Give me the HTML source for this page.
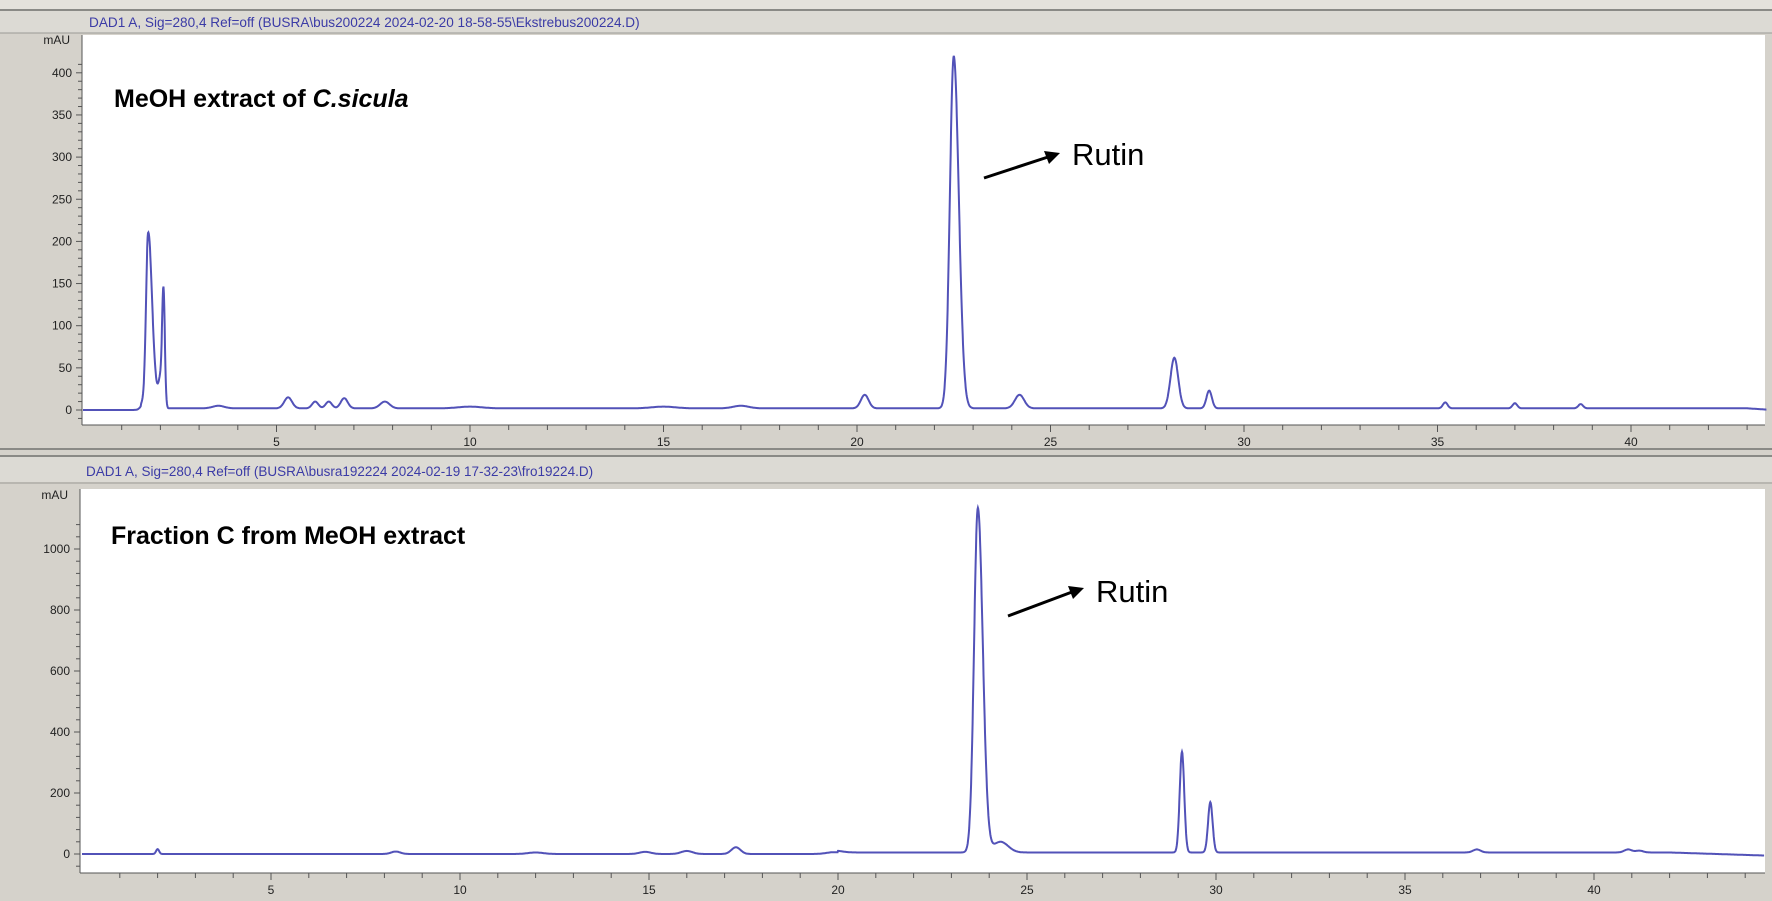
<!DOCTYPE html>
<html><head><meta charset="utf-8"><style>
body{margin:0;width:1772px;height:896px;overflow:hidden;background:#d5d2cb;font-family:"Liberation Sans",Arial,sans-serif}
</style></head><body>
<svg id="s" width="1772" height="896" xmlns="http://www.w3.org/2000/svg" font-family="Liberation Sans, Arial, sans-serif">
<rect x="0" y="0" width="1772" height="896" fill="#d5d2cb"/>
<rect x="0" y="0" width="1772" height="9" fill="#e4e2dc"/>
<line x1="0" y1="10" x2="1772" y2="10" stroke="#8a8a86" stroke-width="2"/>
<rect x="0" y="11" width="1772" height="22" fill="#dcdad4"/>
<line x1="0" y1="33" x2="1772" y2="33" stroke="#9a9a96"/>
<text x="89" y="27" font-size="13.6" fill="#3b3ba6">DAD1 A, Sig=280,4 Ref=off (BUSRA\bus200224 2024-02-20 18-58-55\Ekstrebus200224.D)</text>
<rect x="82" y="35" width="1683" height="390" fill="#fff"/>
<line x1="82" y1="35" x2="82" y2="425" stroke="#555"/>
<line x1="82" y1="425" x2="1765" y2="425" stroke="#555"/>
<line x1="0" y1="449" x2="1772" y2="449" stroke="#8a8a86" stroke-width="2"/>
<line x1="0" y1="456" x2="1772" y2="456" stroke="#8a8a86" stroke-width="2"/>
<rect x="0" y="457" width="1772" height="25" fill="#dcdad4"/>
<line x1="0" y1="483" x2="1772" y2="483" stroke="#9a9a96"/>
<text x="86" y="476" font-size="13.5" fill="#3b3ba6">DAD1 A, Sig=280,4 Ref=off (BUSRA\busra192224 2024-02-19 17-32-23\fro19224.D)</text>
<rect x="80" y="489" width="1685" height="384" fill="#fff"/>
<line x1="80" y1="489" x2="80" y2="873" stroke="#555"/>
<line x1="80" y1="873" x2="1765" y2="873" stroke="#555"/>
<g id="ax" stroke="#555" fill="none"></g>
<g id="lb" font-size="12" fill="#222"></g>
<path id="t1" fill="none" stroke="#5252b8" stroke-width="2"/>
<path id="t2" fill="none" stroke="#5252b8" stroke-width="2"/>
<text x="114" y="107" font-size="25" font-weight="bold" fill="#000">MeOH extract of <tspan font-style="italic">C.sicula</tspan></text>
<text x="111" y="544" font-size="25" font-weight="bold" fill="#000">Fraction C from MeOH extract</text>
<text x="1072" y="165" font-size="31" fill="#000">Rutin</text>
<text x="1096" y="602" font-size="31" fill="#000">Rutin</text>
<line x1="984" y1="178" x2="1048" y2="157" stroke="#000" stroke-width="3"/>
<polygon points="1060,153 1044,151 1049,164" fill="#000"/>
<line x1="1008" y1="616" x2="1072" y2="592" stroke="#000" stroke-width="3"/>
<polygon points="1084,588 1068,586 1073,599" fill="#000"/>
</svg>
<script>
var ns="http://www.w3.org/2000/svg",ax=document.getElementById('ax'),lb=document.getElementById('lb');
function L(x1,y1,x2,y2){var l=document.createElementNS(ns,'line');l.setAttribute('x1',x1);l.setAttribute('y1',y1);l.setAttribute('x2',x2);l.setAttribute('y2',y2);ax.appendChild(l);}
function T(x,y,s,a){var t=document.createElementNS(ns,'text');t.setAttribute('x',x);t.setAttribute('y',y);t.setAttribute('text-anchor',a||'middle');t.textContent=s;lb.appendChild(t);}
var x0=83,px=38.7,y0=410,py=0.843;
for(var m=1;m<=43;m++){var x=x0+m*px;L(x,425,x,m%5?430:432);if(m%5==0)T(x,446,m);}
for(var v=-20;v<=410;v+=10){var y=y0-v*py;if(y<37||y>424)continue;L(76+(v%50?2:0),y,82,y);if(v%50==0&&v>=0)T(72,y+4,v,'end');}
T(70,44,'mAU','end');
var b0=82,bpx=37.8,by0=854,bpy=0.305;
for(m=1;m<=44;m++){x=b0+m*bpx;L(x,873,x,m%5?878:880);if(m%5==0)T(x,894,m);}
for(v=-40;v<=1100;v+=40){y=by0-v*bpy;if(y<491||y>872)continue;L(74+(v%200?2:0),y,80,y);if(v%200==0&&v>=0)T(70,y+4,v,'end');}
T(68,499,'mAU','end');
function g(t,c,h,s){var d=(t-c)/s;return h*Math.exp(-d*d/2);}
function trace(id,X0,PX,Y0,PY,tmax,peaks,base){var d='';for(var t=0;t<=tmax;t+=0.01){var v=base(t);for(var i=0;i<peaks.length;i++){var p=peaks[i];var s=p[2];if(p[3]&&t>p[0])s*=p[3];v+=g(t,p[0],p[1],s);}d+=(t?'L':'M')+(X0+t*PX).toFixed(1)+','+(Y0-v*PY).toFixed(1);}document.getElementById(id).setAttribute('d',d);}
trace('t1',x0,px,y0,py,43.5,[[1.68,170,0.05,1.8],[1.75,45,0.12],[2.0,30,0.05],[2.08,135,0.035],[3.5,3,0.15],[5.3,13,0.1],[6.0,8,0.08],[6.35,8,0.08],[6.75,12,0.09],[7.8,8,0.12],[20.2,16,0.1],[22.5,418,0.1,1.3],[24.2,16,0.12],[28.2,60,0.1],[29.1,21,0.07],[35.2,7,0.06],[37.0,6,0.06],[38.7,5,0.06],[10,2,0.3],[15,2,0.3],[17,3,0.2]],
 function(t){return t<1.5?0:(t<43?2:2-(t-43)*3);});
trace('t2',b0,bpx,by0,bpy,44.5,[[2.0,16,0.04],[8.3,8,0.12],[12,5,0.2],[14.9,7,0.15],[16,10,0.15],[17.3,22,0.12],[19.9,6,0.2],[23.7,1130,0.1,1.3],[24.3,35,0.2],[29.1,330,0.06],[29.85,165,0.06],[36.9,10,0.1],[40.9,10,0.1],[41.2,6,0.1]],
 function(t){return t<20?0:(t<42?5:5-(t-42)*4);});
</script>
</body></html>
